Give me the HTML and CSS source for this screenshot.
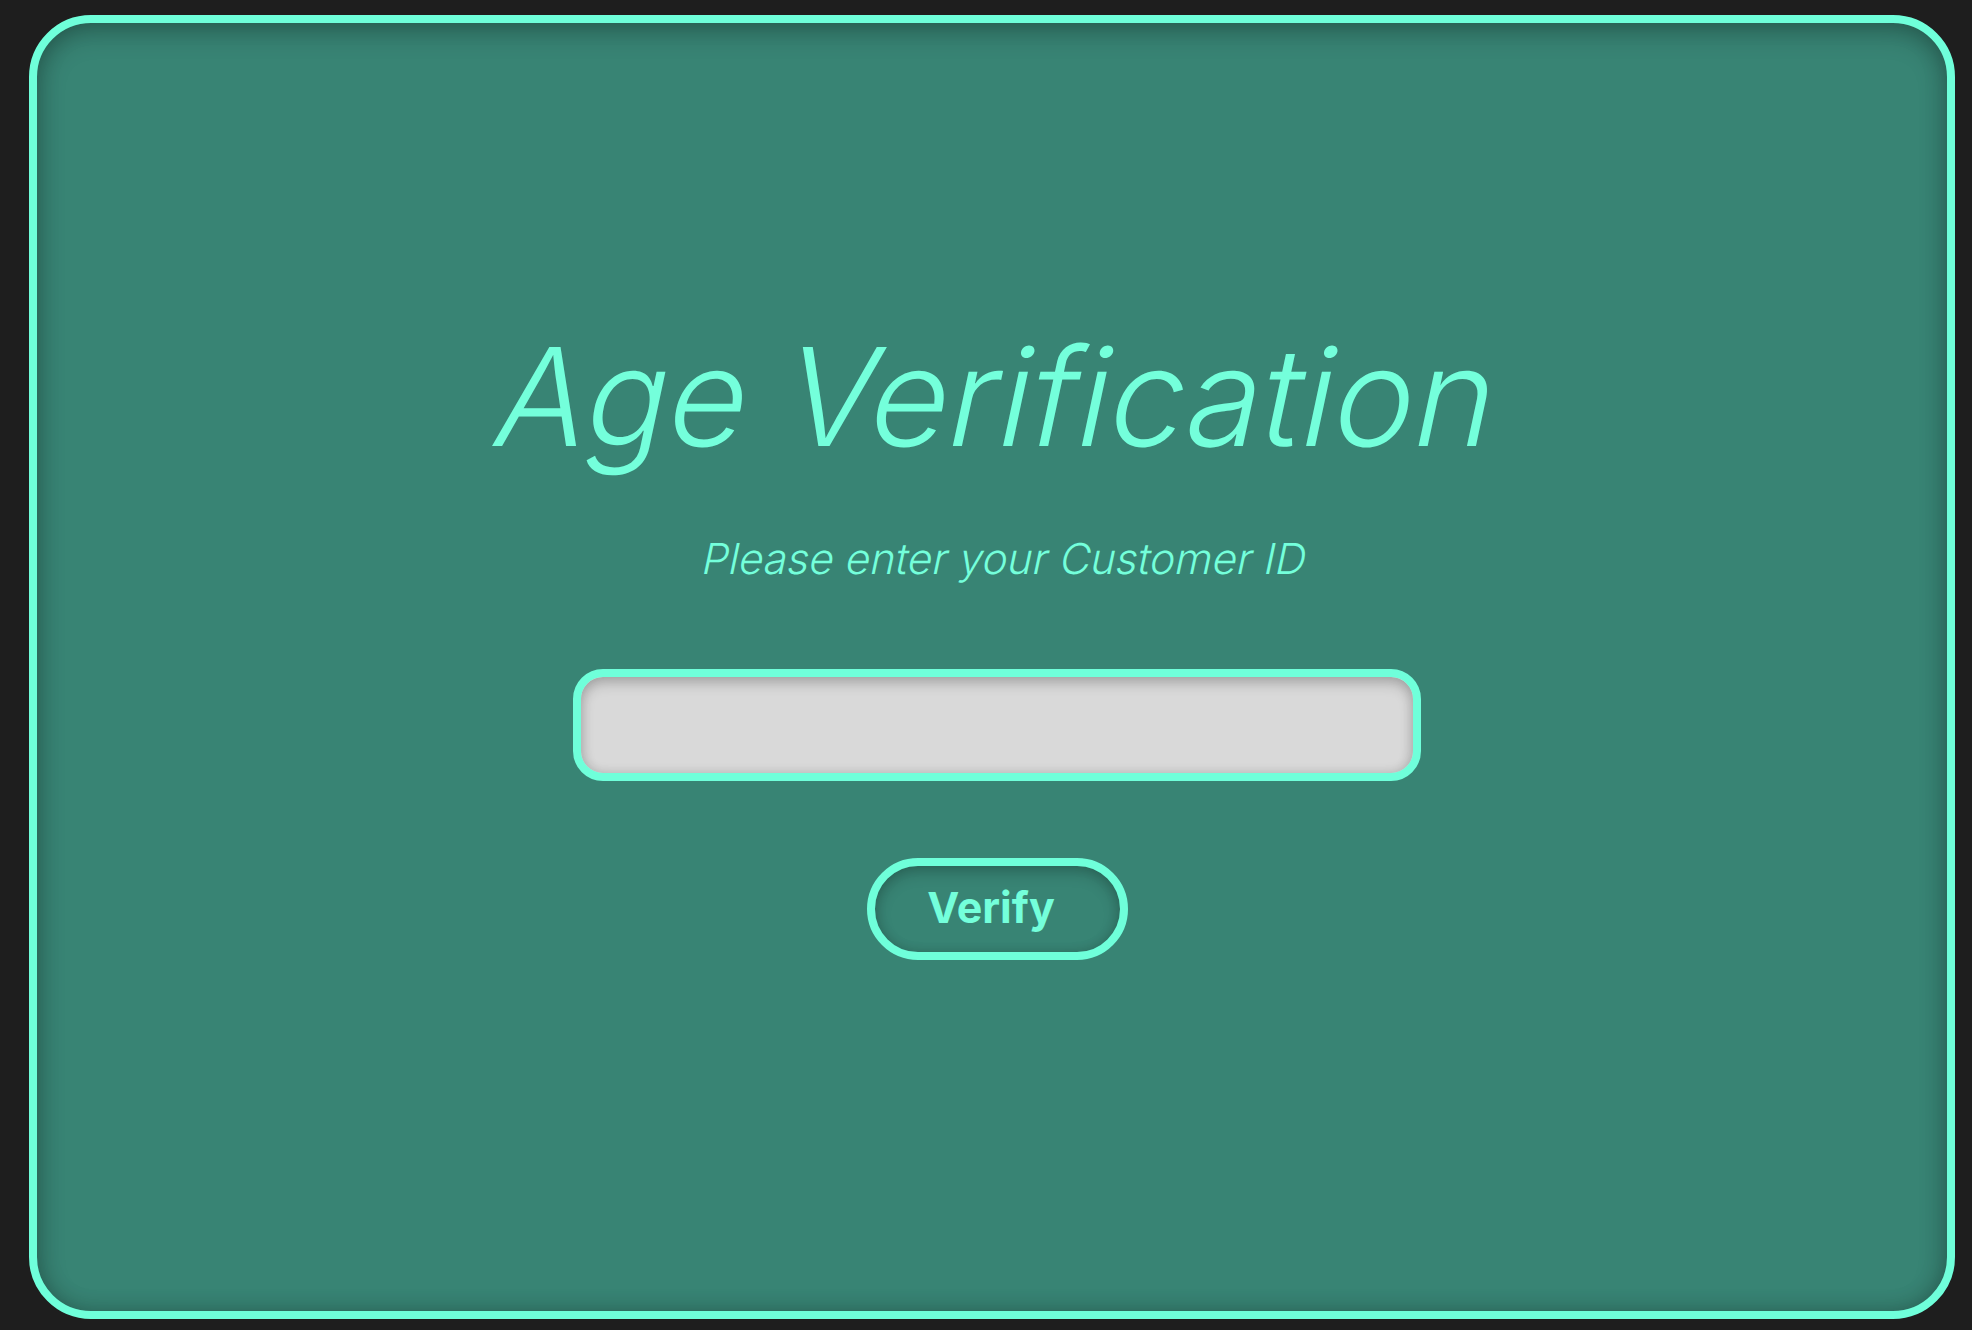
FILE: index.html
```html
<!DOCTYPE html>
<html lang="en">
<head>
<meta charset="utf-8">
<title>Age Verification</title>
<link rel="stylesheet" href="styles.css">
</head>
<body>
<div class="frame">
  <main class="card">
    <h1 class="title"><span class="slant">Age Verification</span></h1>
    <p class="subtitle"><span class="slant">Please enter your Customer ID</span></p>
    <input class="id-input" type="text" aria-label="Customer ID">
    <button class="verify-btn" type="button">Verify</button>
  </main>
</div>
</body>
</html>
```
FILE: styles.css
```css
html, body {
  margin: 0;
  padding: 0;
  background: #1e1e1e;
}
body {
  font-family: Inter, "Noto Sans", "Liberation Sans", sans-serif;
}
.frame {
  width: 1972px;
  height: 1330px;
  box-sizing: border-box;
  padding: 15px 17px 11px 29px;
}
.card {
  box-sizing: border-box;
  width: 100%;
  height: 100%;
  background: #388474;
  border: 8px solid #6fffda;
  border-radius: 62px;
  box-shadow: inset 0 8px 28px rgba(0, 0, 0, 0.24), inset 0 0 22px rgba(0, 0, 0, 0.18);
  display: flex;
  flex-direction: column;
  align-items: center;
  padding: 292px 0 0 10px;
}
.slant {
  display: inline-block;
  transform: skewX(-12deg);
  transform-origin: 50% 80%;
}
.title {
  margin: 0 18px 0 0;
  font-size: 136px;
  line-height: 1.21;
  font-weight: 300;
  font-style: normal;
  color: #74ffdb;
}
.subtitle {
  margin: 53px 0 0 10px;
  font-size: 42.5px;
  line-height: 1.21;
  font-weight: 300;
  font-style: normal;
  color: #74ffdb;
}
.id-input {
  box-sizing: border-box;
  margin-top: 85px;
  width: 848px;
  height: 112px;
  border: 8px solid #6fffda;
  border-radius: 30px;
  background: #d9d9d9;
  box-shadow: inset 0 6px 14px rgba(0, 0, 0, 0.2), inset 0 0 12px rgba(0, 0, 0, 0.12);
  outline: none;
  font-size: 32px;
  padding: 0 24px;
}
.verify-btn {
  box-sizing: border-box;
  margin-top: 77px;
  width: 261px;
  height: 102px;
  border: 8px solid #6fffda;
  border-radius: 51px;
  background: #388474;
  box-shadow: inset 0 6px 16px rgba(0, 0, 0, 0.2), inset 0 0 12px rgba(0, 0, 0, 0.12);
  color: #74ffdb;
  font-family: Inter, "Noto Sans", "Liberation Sans", sans-serif;
  font-size: 43px;
  font-weight: 700;
  padding: 0 12px 4px 0;
  cursor: pointer;
}
```
